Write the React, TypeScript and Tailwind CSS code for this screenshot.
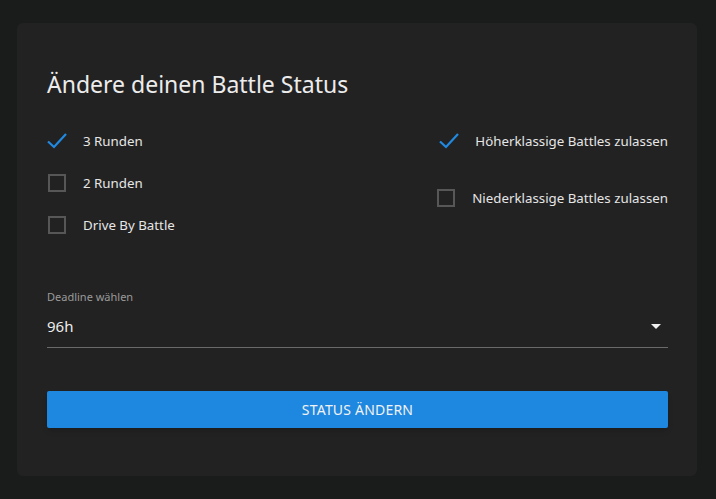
interface Option {
  label: string
  checked: boolean
}

const LEFT: Option[] = [
  { label: '3 Runden', checked: true },
  { label: '2 Runden', checked: false },
  { label: 'Drive By Battle', checked: false },
]

const RIGHT: Option[] = [
  { label: 'Höherklassige Battles zulassen', checked: true },
  { label: 'Niederklassige Battles zulassen', checked: false },
]

function Box({ checked }: { checked: boolean }) {
  if (checked) {
    return (
      <svg width="20" height="18" viewBox="0 0 20 18" className="shrink-0">
        <path d="M1 9.5 L7 15 L19 2" fill="none" stroke="#2189e0" strokeWidth="2.2" />
      </svg>
    )
  }
  return <span className="block w-[18px] h-[18px] border-2 border-[#575757] shrink-0 mx-px" />
}

function Row({ o, gap }: { o: Option; gap: string }) {
  return (
    <label className={`flex items-center ${gap} text-[13.3px] leading-5 text-[#e6e6e6]`}>
      <Box checked={o.checked} />
      <span>{o.label}</span>
    </label>
  )
}

export default function App() {
  return (
    <div
      className="min-h-[499px] bg-[#1a1c1b] pt-[23px] pl-[17px]"
      style={{ fontFamily: '"Noto Sans", "Open Sans", sans-serif' }}
    >
      <div className="w-[680px] h-[453px] bg-[#222222] rounded-md pl-[30px] pr-[29px] pt-[44px]">
        <h1 className="text-[23px] leading-[34px] text-[#ececec]">
          Ändere deinen Battle Status
        </h1>

        <div className="flex justify-between mt-[30px]">
          <div className="flex flex-col gap-[22px]">
            {LEFT.map((o) => (
              <Row key={o.label} o={o} gap="gap-[16px]" />
            ))}
          </div>
          <div className="flex flex-col items-end gap-[37px]">
            {RIGHT.map((o) => (
              <Row key={o.label} o={o} gap="gap-[16px]" />
            ))}
          </div>
        </div>

        <div className="mt-[54px]">
          <div className="text-[11px] leading-4 text-[#9a9a9a]">Deadline wählen</div>
          <div className="flex items-center justify-between h-[43px] border-b border-[#6a6a6a] text-[15px] text-[#ececec]">
            <span>96h</span>
            <svg width="10" height="5" viewBox="0 0 10 5" className="mr-[7px]">
              <path d="M0 0 L10 0 L5 5 Z" fill="#f0f0f0" />
            </svg>
          </div>
        </div>

        <button
          type="button"
          className="mt-[43px] w-full h-[37px] bg-[#1e88e0] text-[#f2f2f2] text-[14px] tracking-[0.2px] uppercase rounded-[2px] shadow-md"
        >
          Status ändern
        </button>
      </div>
    </div>
  )
}
